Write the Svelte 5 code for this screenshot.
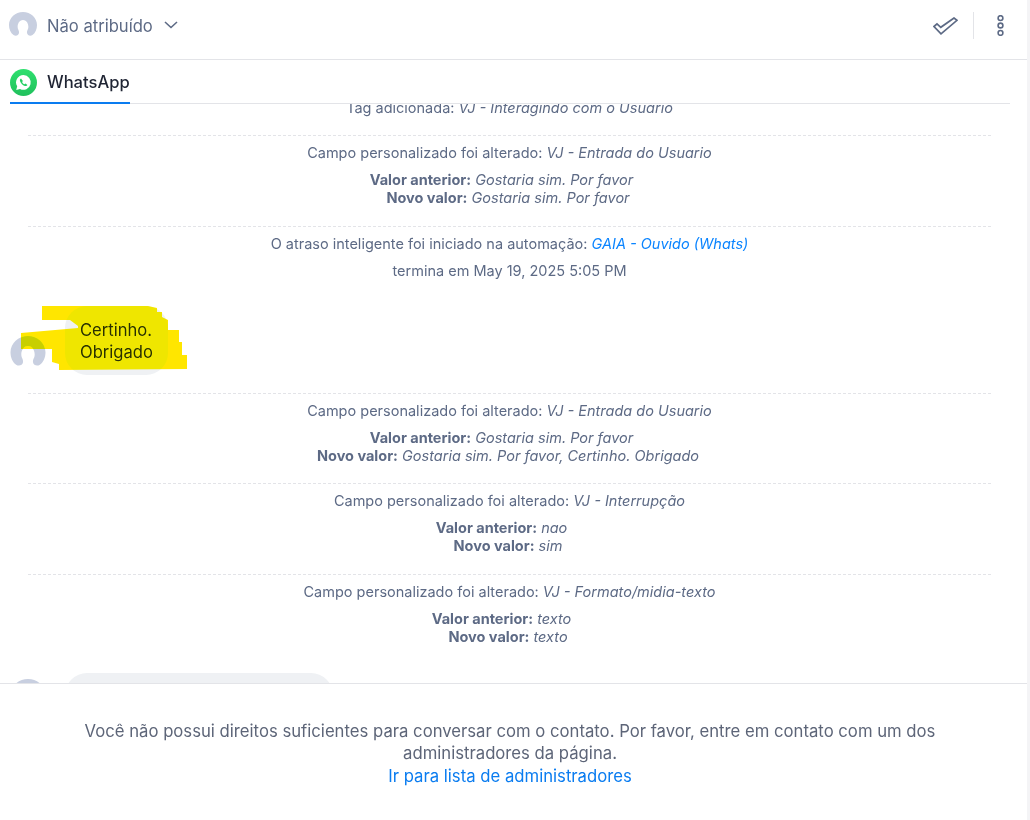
<script>
  const avatar = "M14 0C6.300 0 0 5.800 0 13C0 17 1.600 21 4.500 23C6.800 24.500 9.600 23.400 10 21C10.200 19.400 9.600 18.400 9 17C8 14.500 9 8 14 8C19 8 20 14.500 19 17C18.400 18.400 17.800 19.400 18 21C18.400 23.400 21.200 24.500 23.500 23C26.400 21 28 17 28 13C28 5.800 21.700 0 14 0Z";

  const changes = [
    { kind: "field", name: "VJ - Entrada do Usuario", before: "Gostaria sim. Por favor", after: "Gostaria sim. Por favor" },
    { kind: "delay" },
    { kind: "message" },
    { kind: "field", name: "VJ - Entrada do Usuario", before: "Gostaria sim. Por favor", after: "Gostaria sim. Por favor, Certinho. Obrigado" },
    { kind: "field", name: "VJ - Interrupção", before: "nao", after: "sim" },
    { kind: "field", name: "VJ - Formato/midia-texto", before: "texto", after: "texto" }
  ];
</script>

<div class="panel">
  <header class="top">
    <div class="assignee">
      <svg class="avatar" viewBox="0 0 28 24"><path d={avatar} fill="#c8cfe0" /></svg>
      <span>Não atribuído</span>
      <svg class="chevron" viewBox="0 0 14 8" fill="none" stroke="#5d6a85" stroke-width="1.600"><path d="M1 1l6 5.500L13 1" /></svg>
    </div>
    <div class="actions">
      <svg class="done" viewBox="0 0 25 18" fill="none" stroke="#5d6a85" stroke-width="1.700"><path d="M1 9.500l3-2.600 3.800 3.400L21 1l3 2.300L8 16.800z" /></svg>
      <span class="sep"></span>
      <svg class="more" viewBox="0 0 7 21" fill="none" stroke="#5d6a85" stroke-width="1.600"><circle cx="3.500" cy="3.100" r="2.400" /><circle cx="3.500" cy="10.500" r="2.400" /><circle cx="3.500" cy="17.900" r="2.400" /></svg>
    </div>
  </header>

  <nav class="tabs">
    <div class="tab">
      <svg class="wa" viewBox="0 0 27 27">
        <defs><linearGradient id="wag" x1="0" y1="0" x2="0" y2="1"><stop offset="0" stop-color="#2fe06f" /><stop offset="1" stop-color="#20c05c" /></linearGradient></defs>
        <circle cx="13.500" cy="13.500" r="13.500" fill="url(#wag)" />
        <path d="M13.500 6a7.400 7.400 0 0 0-6.300 11.300L6.200 21l3.800-1a7.400 7.400 0 1 0 3.500-14z" fill="#fff" />
        <path d="M11 9.500c-.9.400-1.300 1.300-1 2.500.6 2.200 2.600 4.300 4.800 4.900 1.200.3 2.200-.1 2.600-1l-1.900-1.400-1 .8c-1-.4-2-1.400-2.400-2.400l.8-1z" fill="#25cf63" />
      </svg>
      <span>WhatsApp</span>
    </div>
  </nav>

  <main class="log">
    <div class="clipped">
      <p class="line">Tag adicionada: <em>VJ - Interagindo com o Usuario</em></p>
    </div>
    {#each changes as item}
      {#if item.kind === "field"}
        <section class="change">
          <p class="line">Campo personalizado foi alterado: <em>{item.name}</em></p>
          <p class="value first"><b>Valor anterior:</b> <em>{item.before}</em></p>
          <p class="value"><b>Novo valor:</b> <em>{item.after}</em></p>
        </section>
      {:else if item.kind === "delay"}
        <section class="change delay">
          <p class="line">O atraso inteligente foi iniciado na automação: <em class="link">GAIA - Ouvido (Whats)</em></p>
          <p class="line ends">termina em May 19, 2025 5:05 PM</p>
        </section>
      {:else}
        <div class="message">
          <svg class="avatar big" viewBox="0 0 28 24"><path d={avatar} fill="#c8cfe0" /></svg>
          <div class="bubble">Certinho.<br />Obrigado</div>
          <svg class="marker" viewBox="10 306 180 66">
            <path d="M42 306H148L157 308V312H162V317L168 320V330H179V342H182V355H187V369L59 370V364L52 362V349H21V333L78 328V326L70 320H42z" fill="#ffe600" />
          </svg>
        </div>
      {/if}
    {/each}
    <div class="message cut">
      <svg class="avatar big" viewBox="0 0 28 24"><path d={avatar} fill="#c8cfe0" /></svg>
      <div class="bubble wide"></div>
    </div>
  </main>

  <footer class="notice">
    <p>Você não possui direitos suficientes para conversar com o contato. Por favor, entre em contato com um dos administradores da página.</p>
    <p class="admins">Ir para lista de administradores</p>
  </footer>
</div>

<style>
  :global(body) {
    font-family: Inter, "Noto Sans", sans-serif;
    background: #fff;
  }

  p {
    margin: 0;
  }

  .panel {
    width: 1027px;
    height: 820px;
    border-right: 3px solid #f4f4f6;
    display: flex;
    flex-direction: column;
    overflow: hidden;
    background: #fff;
  }

  .top {
    flex: none;
    box-sizing: border-box;
    border-bottom: 1px solid #e3e4e8;
    height: 60px;
    padding: 12px 23px 0 9px;
    display: flex;
    justify-content: space-between;
    align-items: flex-start;
  }

  .assignee {
    display: flex;
    align-items: center;
    height: 28px;
    color: #5d6a85;
    font-size: 16.6px;
  }

  .avatar {
    width: 28px;
    height: 24px;
    flex: none;
  }

  .assignee .avatar {
    margin-top: -4px;
  }

  .assignee span {
    margin-left: 10px;
  }

  .chevron {
    width: 14px;
    height: 8px;
    margin-left: 11px;
    margin-top: -3px;
  }

  .actions {
    display: flex;
    align-items: center;
    height: 27px;
  }

  .done {
    width: 25px;
    height: 18px;
  }

  .sep {
    width: 1px;
    height: 27px;
    background: #e3e4e8;
    margin: 0 23px 0 15px;
  }

  .more {
    width: 7px;
    height: 21px;
  }

  .tabs {
    flex: none;
    height: 44px;
    box-sizing: border-box;
    margin: 0 17px 0 10px;
    border-bottom: 1px solid #e3e4e8;
  }

  .tab {
    width: 120px;
    height: 44px;
    box-sizing: border-box;
    padding-top: 9px;
    border-bottom: 2px solid #0a7cf0;
    display: flex;
    align-items: flex-start;
    gap: 10px;
    color: #1f2433;
    font-size: 16.6px;
    font-weight: 500;
  }

  .wa {
    width: 27px;
    height: 27px;
    flex: none;
  }

  .tab span {
    line-height: 26px;
  }

  .log {
    flex: 1;
    min-height: 0;
    overflow: hidden;
    padding: 0 36px 0 28px;
    font-size: 14.5px;
    color: #5d6a85;
    line-height: 18px;
    text-align: center;
  }

  .clipped {
    height: 36px;
    margin-top: -5px;
  }

  .change {
    border-top: 1px dashed #e3e4e8;
    padding-top: 8px;
    height: 90.5px;
    box-sizing: border-box;
  }

  .line {
    height: 18px;
  }

  .value {
    height: 18px;
    padding-right: 3px;
  }

  .value.first {
    margin-top: 9px;
    padding-right: 16px;
  }

  .value b {
    font-weight: 650;
  }

  .delay {
    height: 80px;
  }

  .ends {
    margin-top: 9px;
  }

  .link {
    color: #0a84ff;
  }

  .message {
    position: relative;
    display: flex;
    align-items: flex-end;
    gap: 19px;
    margin: 0 0 18.400px -18px;
    height: 69px;
    text-align: left;
  }

  .avatar.big {
    width: 36px;
    height: 30px;
    margin-bottom: 9px;
  }

  .bubble {
    width: 103px;
    box-sizing: border-box;
    height: 69px;
    padding: 13px 15px;
    border-radius: 22px;
    background: #eff1f4;
    color: #2b2f3a;
    font-size: 16.6px;
    line-height: 22px;
  }

  .marker {
    position: absolute;
    left: 0;
    top: 0;
    width: 180px;
    height: 66px;
    mix-blend-mode: darken;
  }

  .cut {
    margin-top: 8.600px;
    align-items: flex-start;
  }

  .cut .avatar.big {
    margin-top: 6px;
  }

  .wide {
    width: 268px;
    height: 60px;
  }

  .notice {
    flex: none;
    height: 137px;
    box-sizing: border-box;
    border-top: 1px solid #e3e4e8;
    padding: 35.800px 87px 0 80px;
    background: #fff;
    text-align: center;
    font-size: 16.7px;
    line-height: 22.500px;
    color: #5d6578;
  }

  .admins {
    color: #0a7cf0;
  }
</style>
